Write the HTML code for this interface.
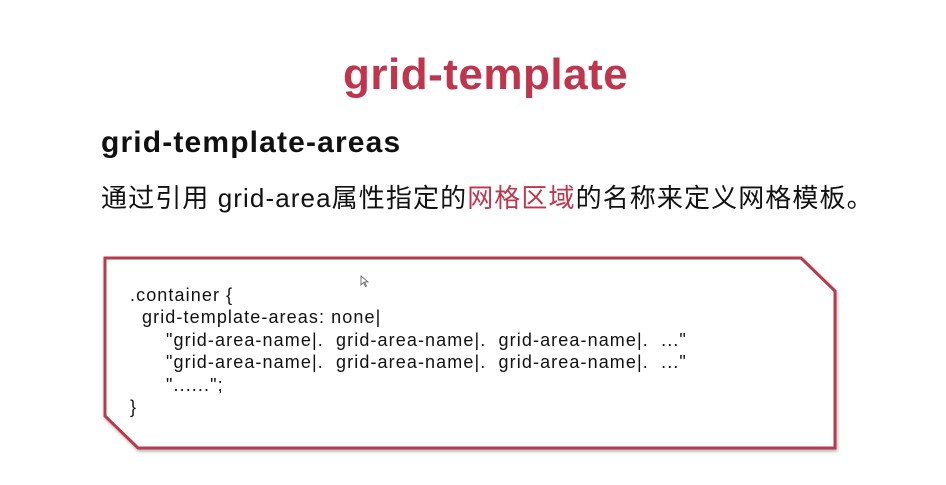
<!DOCTYPE html>
<html><head><meta charset="utf-8"><style>
body{margin:0;width:946px;height:485px;background:#fff;position:relative;overflow:hidden;font-family:"Liberation Sans","Noto Sans CJK SC",sans-serif}
.t{position:absolute;left:343px;top:50px;font-size:44px;font-weight:bold;color:#c0344c;letter-spacing:0.5px;white-space:nowrap}
.h{position:absolute;left:101px;top:126px;font-size:30px;font-weight:bold;color:#111;letter-spacing:1.15px;white-space:nowrap}
.p{position:absolute;left:101px;top:178px;font-size:26px;color:#111;white-space:nowrap;letter-spacing:1.1px}
.p span{color:#c0344c}
.code{position:absolute;left:130px;top:284px;font-size:18px;line-height:22.4px;color:#111;white-space:pre;letter-spacing:1.1px}
.code div{white-space:pre}
</style></head><body>
<div class="t">grid-template</div>
<div class="h">grid-template-areas</div>
<div class="p">通过引用 grid-area属性指定的<span>网格区域</span>的名称来定义网格模板。</div>
<svg style="position:absolute;left:0;top:0" width="946" height="485">
<defs><filter id="s"><feDropShadow dx="1" dy="2" stdDeviation="1.5" flood-color="#000" flood-opacity="0.3"/></filter></defs>
<polygon points="105,258 801,258 835,291 835,448 138,448 105,416" fill="#fff" stroke="#b83a4e" stroke-width="3" filter="url(#s)"/>
<path d="M361 276 v9 l2.5-2.5 2 4 1-.5-2-4 h3.5z" fill="#fff" stroke="#555" stroke-width="0.8"/>
</svg>
<div class="code"><div>.container {</div><div style="padding-left:12px">grid-template-areas: none|</div><div style="padding-left:36px">"grid-area-name|.  grid-area-name|.  grid-area-name|.  ..."</div><div style="padding-left:36px">"grid-area-name|.  grid-area-name|.  grid-area-name|.  ..."</div><div style="padding-left:36px">"......";</div><div>}</div></div>
</body></html>
